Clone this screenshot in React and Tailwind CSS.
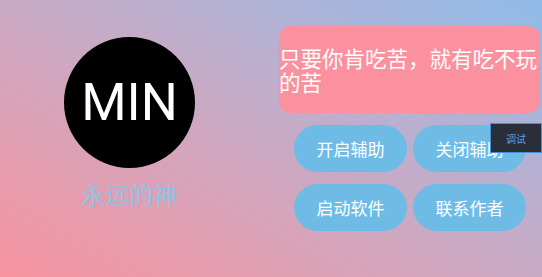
export default function App() {
  const cjk = { fontFamily: '"Noto Sans CJK SC", "Noto Sans", sans-serif' };
  return (
    <div className="relative flex w-[542px] h-[277px] overflow-hidden bg-linear-to-tr from-[#f7929e] to-[#8ebbe9]" style={cjk}>
      <div className="flex w-[259px] flex-col items-center pt-[37px]">
        <div className="flex h-[131px] w-[131px] items-center justify-center rounded-full bg-black">
          <span className="text-[52px] leading-none text-white" style={{ fontFamily: 'Roboto, "Noto Sans", sans-serif' }}>MIN</span>
        </div>
        <div className="mt-[12px] text-[24px] leading-[28px] text-[#8ec3e6]">永远的神</div>
      </div>
      <div className="ml-[20px] flex w-[261px] flex-col pt-[26px]">
        <div className="flex h-[87px] items-center rounded-[12px] bg-[#fb919e]">
          <p className="text-[21.5px] leading-[24px] text-white">只要你肯吃苦，就有吃不玩的苦</p>
        </div>
        <div className="ml-[15px] mt-[12px] grid w-[232px] grid-cols-2 gap-x-[6px] gap-y-[12px]">
          {["开启辅助", "关闭辅助", "启动软件", "联系作者"].map((t) => (
            <div key={t} className="flex h-[47px] w-[113px] items-center justify-center rounded-full bg-[#6ebce6] text-[17px] text-white">
              {t}
            </div>
          ))}
        </div>
      </div>
      <div className="absolute right-0 top-[123px] flex h-[30px] w-[52px] items-center justify-center border border-[#4a8fdc] bg-[#2a2e39] text-[10px] text-[#5d9ce2]">
        调试
      </div>
    </div>
  );
}
